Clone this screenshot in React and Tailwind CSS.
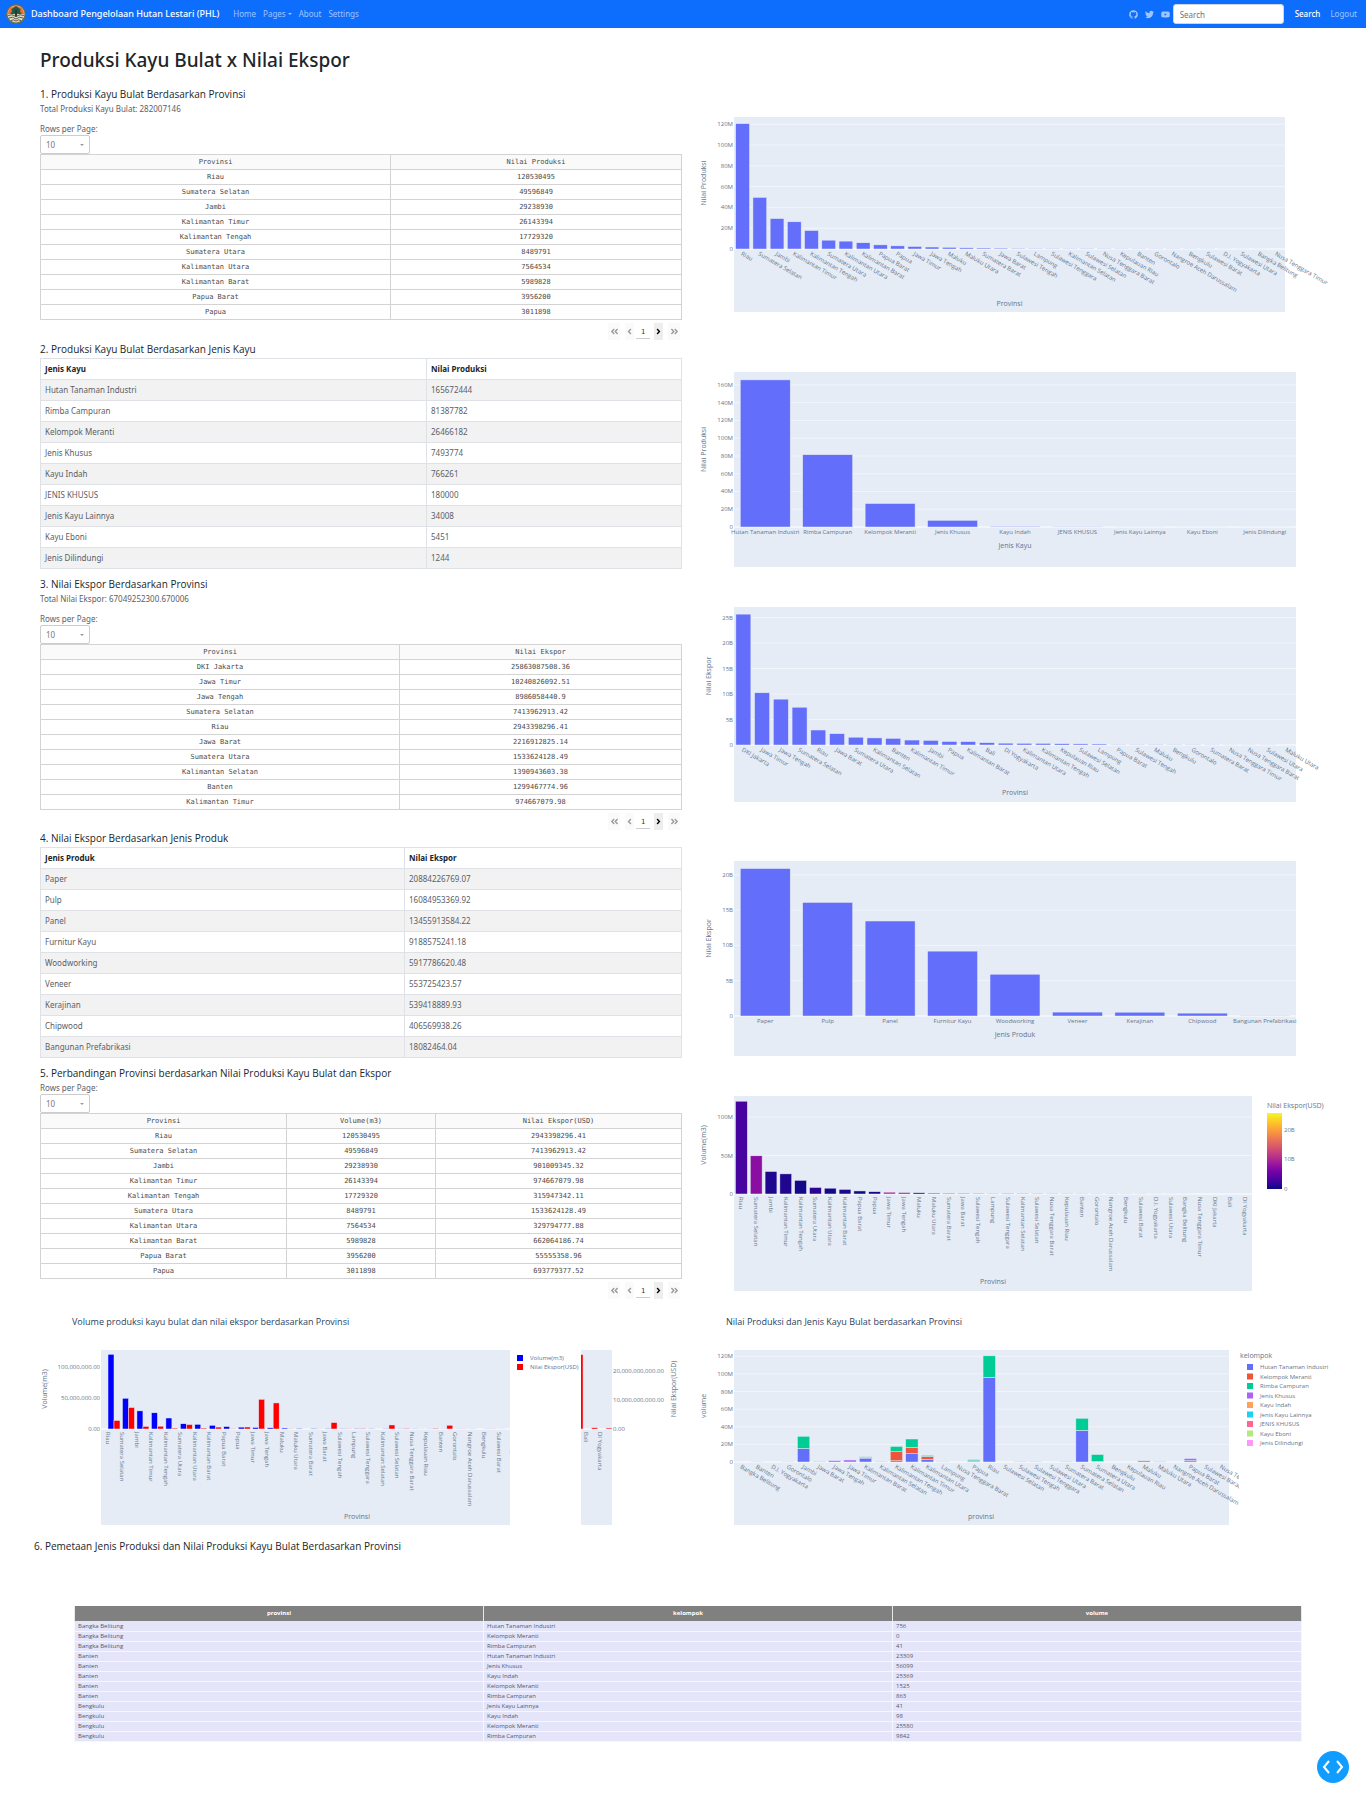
import React from "react";
import {
  FaAngleDoubleLeft,
  FaAngleDoubleRight,
  FaAngleLeft,
  FaAngleRight,
  FaGithub,
  FaTwitter,
  FaYoutube,
} from "react-icons/fa";

/* ---------- data ---------- */

const productionByProvince = [
  ["Riau", 120.53], ["Sumatera Selatan", 49.6], ["Jambi", 29.24], ["Kalimantan Timur", 26.14],
  ["Kalimantan Tengah", 17.73], ["Sumatera Utara", 8.49], ["Kalimantan Utara", 7.56],
  ["Kalimantan Barat", 5.99], ["Papua Barat", 3.96], ["Papua", 3.01], ["Jawa Timur", 2.4],
  ["Jawa Tengah", 1.9], ["Maluku", 1.6], ["Maluku Utara", 1.1], ["Sumatera Barat", 0.95],
  ["Jawa Barat", 0.85], ["Sulawesi Tengah", 0.6], ["Lampung", 0.4], ["Sulawesi Tenggara", 0.3],
  ["Kalimantan Selatan", 0.25], ["Sulawesi Selatan", 0.2], ["Nusa Tenggara Barat", 0.15],
  ["Kepulauan Riau", 0.12], ["Banten", 0.11], ["Gorontalo", 0.1], ["Nangroe Aceh Darussalam", 0.1],
  ["Bengkulu", 0.08], ["Sulawesi Barat", 0.06], ["D.I. Yogyakarta", 0.04], ["Sulawesi Utara", 0.02],
  ["Bangka Belitung", 0.01], ["Nusa Tenggara Timur", 0],
];

const exportByProvince = [
  ["DKI Jakarta", 25.66], ["Jawa Timur", 10.24], ["Jawa Tengah", 8.99], ["Sumatera Selatan", 7.41],
  ["Riau", 2.94], ["Jawa Barat", 2.22], ["Sumatera Utara", 1.53], ["Kalimantan Selatan", 1.39],
  ["Banten", 1.3], ["Kalimantan Timur", 0.97], ["Jambi", 0.9], ["Papua", 0.69],
  ["Kalimantan Barat", 0.66], ["Bali", 0.45], ["DI Yogyakarta", 0.36], ["Kalimantan Utara", 0.33],
  ["Kalimantan Tengah", 0.32], ["Kepulauan Riau", 0.25], ["Sulawesi Selatan", 0.22], ["Lampung", 0.2],
  ["Papua Barat", 0.06], ["Sulawesi Tengah", 0.05], ["Maluku", 0.04], ["Bengkulu", 0.03],
  ["Gorontalo", 0.03], ["Sumatera Barat", 0.02], ["Nusa Tenggara Timur", 0.01],
  ["Nusa Tenggara Barat", 0.01], ["Sulawesi Utara", 0.01], ["Maluku Utara", 0],
];

const exportLookup = Object.fromEntries(exportByProvince);

const comparison = [
  ...productionByProvince,
  ["DKI Jakarta", 0],
  ["Bali", 0],
  ["DI Yogyakarta", 0],
].map(([name, volume]) => ({ name, volume, value: exportLookup[name] || 0 }));

const woodRows = [
  ["Hutan Tanaman Industri", "165672444"], ["Rimba Campuran", "81387782"],
  ["Kelompok Meranti", "26466182"], ["Jenis Khusus", "7493774"], ["Kayu Indah", "766261"],
  ["JENIS KHUSUS", "180000"], ["Jenis Kayu Lainnya", "34008"], ["Kayu Eboni", "5451"],
  ["Jenis Dilindungi", "1244"],
];

const productRows = [
  ["Paper", "20884226769.07"], ["Pulp", "16084953369.92"], ["Panel", "13455913584.22"],
  ["Furnitur Kayu", "9188575241.18"], ["Woodworking", "5917786620.48"], ["Veneer", "553725423.57"],
  ["Kerajinan", "539418889.93"], ["Chipwood", "406569938.26"], ["Bangunan Prefabrikasi", "18082464.04"],
];

const productionRows = [
  ["Riau", "120530495"], ["Sumatera Selatan", "49596849"], ["Jambi", "29238930"],
  ["Kalimantan Timur", "26143394"], ["Kalimantan Tengah", "17729320"], ["Sumatera Utara", "8489791"],
  ["Kalimantan Utara", "7564534"], ["Kalimantan Barat", "5989828"], ["Papua Barat", "3956200"],
  ["Papua", "3011898"],
];

const exportRows = [
  ["DKI Jakarta", "25863087508.36"], ["Jawa Timur", "10240826092.51"], ["Jawa Tengah", "8986058440.9"],
  ["Sumatera Selatan", "7413962913.42"], ["Riau", "2943398296.41"], ["Jawa Barat", "2216912825.14"],
  ["Sumatera Utara", "1533624128.49"], ["Kalimantan Selatan", "1390943603.38"],
  ["Banten", "1299467774.96"], ["Kalimantan Timur", "974667079.98"],
];

const comparisonRows = [
  ["Riau", "120530495", "2943398296.41"], ["Sumatera Selatan", "49596849", "7413962913.42"],
  ["Jambi", "29238930", "901009345.32"], ["Kalimantan Timur", "26143394", "974667079.98"],
  ["Kalimantan Tengah", "17729320", "315947342.11"], ["Sumatera Utara", "8489791", "1533624128.49"],
  ["Kalimantan Utara", "7564534", "329794777.88"], ["Kalimantan Barat", "5989828", "662064186.74"],
  ["Papua Barat", "3956200", "55555358.96"], ["Papua", "3011898", "693779377.52"],
];

const groups = [
  ["Hutan Tanaman Industri", "#636efa"], ["Kelompok Meranti", "#EF553B"], ["Rimba Campuran", "#00cc96"],
  ["Jenis Khusus", "#ab63fa"], ["Kayu Indah", "#FFA15A"], ["Jenis Kayu Lainnya", "#19d3f3"],
  ["JENIS KHUSUS", "#FF6692"], ["Kayu Eboni", "#B6E880"], ["Jenis Dilindungi", "#FF97FF"],
];

// Stacked volumes per province, in the order of `groups`.
const stacks = [
  ["Bangka Belitung", []], ["Banten", [0, 0, 0, 0.1]], ["D.I. Yogyakarta", []], ["Gorontalo", [0.1]],
  ["Jambi", [15.3, 0, 13.9]], ["Jawa Barat", [0, 0, 0, 0.5]], ["Jawa Tengah", [0, 0, 0, 1.6]],
  ["Jawa Timur", [0, 0, 0, 2.3]], ["Kalimantan Barat", [4.4, 0.9, 0.6]], ["Kalimantan Selatan", [0.2]],
  ["Kalimantan Tengah", [1.4, 10.3, 6]], ["Kalimantan Timur", [9.4, 7, 9.7]],
  ["Kalimantan Utara", [2.8, 3.6, 1.1]], ["Lampung", [0, 0, 0, 0.2]], ["Nusa Tenggara Barat", []],
  ["Papua", [0, 0.3, 1.9, 0.8]], ["Riau", [96, 0, 24.5]], ["Sulawesi Selatan", []],
  ["Sulawesi Tengah", [0, 0.2]], ["Sulawesi Tenggara", [0, 0.2]], ["Sulawesi Utara", []],
  ["Sumatera Barat", [0, 0.4]], ["Sumatera Selatan", [36, 0, 13.6]], ["Sumatera Utara", [0.8, 0, 7.7]],
  ["Bengkulu", []], ["Kepulauan Riau", []], ["Maluku", [0, 1.3]], ["Maluku Utara", [0, 0.1, 0.6]],
  ["Nangroe Aceh Darussalam", []], ["Papua Barat", [0, 0, 1.7, 2.2]], ["Sulawesi Barat", []],
  ["Nusa Tenggara Timur", []],
];

const mappingRows = [
  ["Bangka Belitung", "Hutan Tanaman Industri", "756"], ["Bangka Belitung", "Kelompok Meranti", "0"],
  ["Bangka Belitung", "Rimba Campuran", "41"], ["Banten", "Hutan Tanaman Industri", "23309"],
  ["Banten", "Jenis Khusus", "56099"], ["Banten", "Kayu Indah", "25369"],
  ["Banten", "Kelompok Meranti", "1525"], ["Banten", "Rimba Campuran", "863"],
  ["Bengkulu", "Jenis Kayu Lainnya", "41"], ["Bengkulu", "Kayu Indah", "98"],
  ["Bengkulu", "Kelompok Meranti", "25580"], ["Bengkulu", "Rimba Campuran", "9842"],
];

/* ---------- charts ---------- */

const PLASMA = [
  [13, 8, 135], [70, 3, 159], [114, 1, 168], [156, 23, 158], [189, 55, 134],
  [216, 87, 107], [237, 121, 83], [251, 159, 58], [253, 202, 38], [240, 249, 33],
];

function plasma(t) {
  const p = Math.min(Math.max(t, 0), 1) * 9;
  const i = Math.min(Math.floor(p), 8);
  const mix = PLASMA[i].map((c, k) => Math.round(c + (PLASMA[i + 1][k] - c) * (p - i)));
  return `rgb(${mix.join(",")})`;
}

const PAPER = "#E5ECF6";

function ChartSvg({ label, children }) {
  return (
    <svg
      viewBox="0 0 642 225"
      role="img"
      aria-label={label}
      className="block h-auto w-full overflow-visible fill-[#66758c] font-['Open_Sans',sans-serif] text-[6px]"
    >
      {children}
    </svg>
  );
}

function Bar({ x, y, w, h, fill }) {
  return <rect x={x} y={y} width={w} height={h} fill={fill} stroke={PAPER} strokeWidth="0.5" />;
}

function Grid({ left, right, zero, step, unit, ticks }) {
  return ticks.map((t, i) => (
    <g key={t}>
      <line
        x1={left}
        x2={right}
        y1={zero - i * step * unit}
        y2={zero - i * step * unit}
        stroke="#fff"
        strokeWidth={i === 0 ? 1 : 0.5}
      />
      <text x={left - 1} y={zero - i * step * unit + 2} textAnchor="end">{t}</text>
    </g>
  ));
}

function YTitle({ x, y, children }) {
  return (
    <text transform={`translate(${x} ${y}) rotate(-90)`} textAnchor="middle" className="text-[7px]">
      {children}
    </text>
  );
}

function BarChart({ label, data, right, zero, unit, step, ticks, xTitle, xTitleY, yTitle, yTitleX, angle = 0, colors }) {
  const left = 40;
  const slot = (right - left) / data.length;
  return (
    <ChartSvg label={label}>
      <rect x={left} y="30" width={right - left} height="195" fill={PAPER} />
      <Grid left={left} right={right} zero={zero} step={step} unit={unit} ticks={ticks} />
      {data.map(([name, value], i) => {
        const cx = left + slot * (i + 0.5);
        return (
          <g key={name}>
            {value > 0 && (
              <Bar x={cx - slot * 0.4} y={zero - value * unit} w={slot * 0.8} h={value * unit} fill={colors ? colors[i] : "#636efa"} />
            )}
            {angle === 0 && <text x={cx} y={zero + 7} textAnchor="middle">{name}</text>}
            {angle === 30 && <text transform={`translate(${cx - 2} ${zero + 6}) rotate(30)`}>{name}</text>}
            {angle === 90 && <text transform={`translate(${cx - 2} ${zero + 3}) rotate(90)`}>{name}</text>}
          </g>
        );
      })}
      <text x={(left + right) / 2} y={xTitleY} textAnchor="middle" className="text-[7px]">{xTitle}</text>
      <YTitle x={yTitleX} y={(30 + zero) / 2}>{yTitle}</YTitle>
      {colors && (
        <>
          <defs>
            <linearGradient id="plasma" x1="0" y1="1" x2="0" y2="0">
              {PLASMA.map((c, i) => (
                <stop key={i} offset={i / 9} stopColor={`rgb(${c.join(",")})`} />
              ))}
            </linearGradient>
          </defs>
          <rect x="573" y="47" width="15" height="76" fill="url(#plasma)" />
          <text x="573" y="42" className="text-[7px]">Nilai Ekspor(USD)</text>
          <text x="590" y="66">20B</text>
          <text x="590" y="95">10B</text>
          <text x="590" y="125">0</text>
        </>
      )}
    </ChartSvg>
  );
}

function DualAxisChart() {
  const zero = 129;
  const at = (i) => 68 + i * 14.47;
  return (
    <ChartSvg label="Volume produksi kayu bulat dan nilai ekspor berdasarkan Provinsi">
      <text x="32" y="25" className="fill-[#2a3f5f] text-[9px]">
        Volume produksi kayu bulat dan nilai ekspor berdasarkan Provinsi
      </text>
      <rect x="61" y="50" width="511" height="175" fill={PAPER} />
      <line x1="61" x2="572" y1={zero} y2={zero} stroke="#fff" />
      {comparison.map(({ name, volume, value }, i) => {
        const w = Math.min(6, 572 - at(i) - 6);
        return (
          <g key={name}>
            {volume > 0 && <Bar x={at(i)} y={zero - volume * 0.62} w={6} h={volume * 0.62} fill="#00f" />}
            {value > 0 && w > 0 && <Bar x={at(i) + 6} y={zero - value * 2.9} w={w} h={value * 2.9} fill="#f00" />}
            <text transform={`translate(${at(i) - 2} ${zero + 3}) rotate(90)`}>{name}</text>
          </g>
        );
      })}
      <rect x="470" y="50" width="71" height="175" fill="#fff" />
      <rect x="477" y="55" width="6" height="6" fill="#00f" />
      <text x="490" y="60">Volume(m3)</text>
      <rect x="477" y="64" width="6" height="6" fill="#f00" />
      <text x="490" y="69">Nilai Ekspor(USD)</text>
      <text x="60" y="69" textAnchor="end">100,000,000.00</text>
      <text x="60" y="100" textAnchor="end">50,000,000.00</text>
      <text x="60" y="131" textAnchor="end">0.00</text>
      <text x="573" y="73">20,000,000,000.00</text>
      <text x="573" y="102">10,000,000,000.00</text>
      <text x="573" y="131">0.00</text>
      <text x="317" y="219" textAnchor="middle" className="text-[7px]">Provinsi</text>
      <YTitle x={7} y={89}>Volume(m3)</YTitle>
      <YTitle x={636} y={89}>Nilai Ekspor(USD)</YTitle>
    </ChartSvg>
  );
}

function StackedChart() {
  const zero = 162;
  const unit = 0.881;
  const slot = 495 / stacks.length;
  return (
    <ChartSvg label="Nilai Produksi dan Jenis Kayu Bulat berdasarkan Provinsi">
      <defs>
        <clipPath id="stack-labels">
          <rect x="0" y="50" width="545" height="175" />
        </clipPath>
      </defs>
      <text x="32" y="25" className="fill-[#2a3f5f] text-[9px]">
        Nilai Produksi dan Jenis Kayu Bulat berdasarkan Provinsi
      </text>
      <rect x="40" y="50" width="495" height="175" fill={PAPER} />
      <Grid left={40} right={535} zero={zero} step={20} unit={unit} ticks={["0", "20M", "40M", "60M", "80M", "100M", "120M"]} />
      <g clipPath="url(#stack-labels)">
        {stacks.map(([name, parts], i) => {
          const cx = 40 + slot * (i + 0.5);
          return (
            <g key={name}>
              {parts.map((v, k) => {
                const base = parts.slice(0, k).reduce((a, b) => a + b, 0);
                return v > 0 ? (
                  <Bar key={k} x={cx - slot * 0.4} y={zero - (base + v) * unit} w={slot * 0.8} h={v * unit} fill={groups[k][1]} />
                ) : null;
              })}
              <text transform={`translate(${cx - 2} ${zero + 6}) rotate(30)`}>{name}</text>
            </g>
          );
        })}
      </g>
      <text x="287" y="219" textAnchor="middle" className="text-[7px]">provinsi</text>
      <YTitle x={12} y={106}>volume</YTitle>
      <text x="546" y="58" className="text-[7px]">kelompok</text>
      {groups.map(([name, color], i) => (
        <g key={name}>
          <rect x="553" y={64 + i * 9.5} width="6" height="6" fill={color} />
          <text x="566" y={69 + i * 9.5}>{name}</text>
        </g>
      ))}
    </ChartSvg>
  );
}

/* ---------- tables ---------- */

function DataTable({ columns, widths, rows }) {
  return (
    <table className="w-full table-fixed border-collapse text-center font-['DejaVu_Sans_Mono',monospace] text-[7px] leading-[14px] text-[#4a4a4a]">
      <colgroup>
        {widths.map((w, i) => (
          <col key={i} className={w} />
        ))}
      </colgroup>
      <thead>
        <tr className="bg-[#fafafa]">
          {columns.map((c) => (
            <th key={c} className="border border-[#d3d3d3] p-0 font-normal">{c}</th>
          ))}
        </tr>
      </thead>
      <tbody>
        {rows.map((r) => (
          <tr key={r[0]}>
            {r.map((v, i) => (
              <td key={i} className="border border-[#d3d3d3] p-0">{v}</td>
            ))}
          </tr>
        ))}
      </tbody>
    </table>
  );
}

function StripedTable({ columns, widths, rows }) {
  return (
    <table className="w-full table-fixed border-collapse text-left text-[8px] leading-3 text-[#5c6066]">
      <colgroup>
        {widths.map((w, i) => (
          <col key={i} className={w} />
        ))}
      </colgroup>
      <thead>
        <tr>
          {columns.map((c) => (
            <th key={c} className="border border-[#dee2e6] px-1 py-1 font-bold text-[#212529]">{c}</th>
          ))}
        </tr>
      </thead>
      <tbody>
        {rows.map((r) => (
          <tr key={r[0]} className="odd:bg-[#f2f2f2]">
            {r.map((v, i) => (
              <td key={i} className="border border-[#dee2e6] px-1 py-1">{v}</td>
            ))}
          </tr>
        ))}
      </tbody>
    </table>
  );
}

function RowsPerPage({ id }) {
  return (
    <div className="flex flex-col items-start">
      <label htmlFor={id} className="text-[8px] leading-3 text-[#5c6066]">Rows per Page:</label>
      <div className="relative">
        <select
          id={id}
          defaultValue="10"
          className="block h-[19px] w-[50px] appearance-none rounded-[2px] border border-[#ccc] bg-white pl-[5px] text-[8px] text-[#777]"
        >
          <option>10</option>
          <option>25</option>
          <option>50</option>
        </select>
        <span className="pointer-events-none absolute right-[6px] top-[9px] border-x-2 border-t-2 border-x-transparent border-t-[#999]" />
      </div>
    </div>
  );
}

function Pager({ id }) {
  return (
    <nav aria-label="Pagination" className="mt-[3px] flex h-[17px] items-stretch justify-end pr-[2px] text-[9px] text-[#999]">
      <button type="button" aria-label="First page" disabled className="flex w-3 items-center justify-center bg-[#fafafa]"><FaAngleDoubleLeft /></button>
      <button type="button" aria-label="Previous page" disabled className="ml-[5px] flex w-[9px] items-center justify-center bg-[#fafafa]"><FaAngleLeft /></button>
      <input
        id={id}
        aria-label="Current page"
        defaultValue="1"
        className="ml-[2px] mb-px w-[14px] border-b border-[#ccc] pt-[3px] text-center font-['DejaVu_Sans_Mono',monospace] text-[7px] text-[#333]"
      />
      <button type="button" aria-label="Next page" className="ml-1 flex w-[9px] items-center justify-center bg-[#eee] text-black"><FaAngleRight /></button>
      <button type="button" aria-label="Last page" className="ml-[5px] flex w-3 items-center justify-center bg-[#fafafa]"><FaAngleDoubleRight /></button>
    </nav>
  );
}

function Section({ title, total, children, chart, className = "" }) {
  return (
    <section className={`grid grid-cols-2 items-start gap-x-3 px-[6px] ${className}`}>
      <div>
        <h2 className="mb-[2px] font-['Open_Sans',sans-serif] text-[10px] font-medium leading-[14px] text-[#212529]">{title}</h2>
        {total && <p className="mb-2 text-[8px] leading-3 text-[#5c6066]">{total}</p>}
        {children}
      </div>
      {chart}
    </section>
  );
}

/* ---------- header ---------- */

function Logo() {
  return (
    <svg viewBox="0 0 40 40" className="size-5" role="img" aria-label="Logo">
      <circle cx="20" cy="20" r="20" fill="#6d6a4e" />
      <circle cx="20" cy="20" r="17" fill="#dcdccb" />
      <path d="M4 20a16 16 0 0 1 32 0Z" fill="#ee6a2b" />
      <path d="M20 4 25 8 29 10 28 15 31 20H23L20 17 17 20H9L12 15 11 10 15 8Z" fill="#1d5c48" />
      <path d="M18 11h4v15h-4z" fill="#2f3a2c" />
      <path d="M4 23q8-4 16 2 8-6 16-2M6 28q7-4 14 2 7-6 14-2M10 33q5-3 10 1 5-4 10-1" fill="none" stroke="#5d5c45" strokeWidth="2" />
    </svg>
  );
}

function Navbar() {
  return (
    <header className="flex h-7 items-center bg-[#0d6efd] pl-[6px] pr-[9px] text-[8px] text-white/60">
      <Logo />
      <a href="#" className="ml-[5px] text-[9px] font-medium leading-7 text-white">Dashboard Pengelolaan Hutan Lestari (PHL)</a>
      <nav className="ml-[14px] flex items-center gap-[7px]">
        <a href="#">Home</a>
        <a href="#" className="flex items-center gap-[2px]">
          Pages
          <span className="border-x-2 border-t-2 border-x-transparent border-t-current" />
        </a>
        <a href="#">About</a>
        <a href="#">Settings</a>
      </nav>
      <div className="ml-auto flex items-center">
        <a href="#" aria-label="GitHub" className="mr-[7px] text-[9px]"><FaGithub /></a>
        <a href="#" aria-label="Twitter" className="mr-[7px] text-[9px]"><FaTwitter /></a>
        <a href="#" aria-label="YouTube" className="mr-[3px] text-[9px]"><FaYoutube /></a>
        <input
          type="search"
          aria-label="Search"
          placeholder="Search"
          className="h-5 w-[111px] rounded-[3px] border border-[#ced4da] bg-white px-[6px] text-[8px] text-[#212529] placeholder:text-[#6c757d]"
        />
        <button type="button" className="ml-[11px] font-medium text-white">Search</button>
        <a href="#" className="ml-[10px]">Logout</a>
      </div>
    </header>
  );
}

/* ---------- page ---------- */

export default function App() {
  const short = (rows, scale) => rows.map(([n, v]) => [n, Number(v) / scale]);
  return (
    <div className="min-h-screen bg-white font-['Noto_Sans',sans-serif] text-[#212529]">
      <Navbar />
      <main className="pb-14 pl-[34px] pr-6">
        <h1 className="px-[6px] pb-[14px] pt-5 text-[19px] font-medium leading-[25px]">Produksi Kayu Bulat x Nilai Ekspor</h1>

        <Section
          title="1. Produksi Kayu Bulat Berdasarkan Provinsi"
          total="Total Produksi Kayu Bulat: 282007146"
          className="pb-[2px]"
          chart={
            <BarChart label="Nilai produksi per provinsi" data={productionByProvince} right={591} zero={162} unit={1.04} step={20}
              ticks={["0", "20M", "40M", "60M", "80M", "100M", "120M"]} xTitle="Provinsi" xTitleY={219} yTitle="Nilai Produksi" yTitleX={12} angle={30} />
          }
        >
          <RowsPerPage id="rows-production" />
          <DataTable columns={["Provinsi", "Nilai Produksi"]} widths={["w-[350px]", ""]} rows={productionRows} />
          <Pager id="page-production" />
        </Section>

        <Section
          title="2. Produksi Kayu Bulat Berdasarkan Jenis Kayu"
          className="pb-2"
          chart={
            <BarChart label="Nilai produksi per jenis kayu" data={short(woodRows, 1e6)} right={602} zero={185} unit={0.888} step={20}
              ticks={["0", "20M", "40M", "60M", "80M", "100M", "120M", "140M", "160M"]} xTitle="Jenis Kayu" xTitleY={206} yTitle="Nilai Produksi" yTitleX={12} />
          }
        >
          <StripedTable columns={["Jenis Kayu", "Nilai Produksi"]} widths={["w-[386px]", ""]} rows={woodRows} />
        </Section>

        <Section
          title="3. Nilai Ekspor Berdasarkan Provinsi"
          total="Total Nilai Ekspor: 67049252300.670006"
          className="pb-px"
          chart={
            <BarChart label="Nilai ekspor per provinsi" data={exportByProvince} right={602} zero={168} unit={5.1} step={5}
              ticks={["0", "5B", "10B", "15B", "20B", "25B"]} xTitle="Provinsi" xTitleY={218} yTitle="Nilai Ekspor" yTitleX={17} angle={30} />
          }
        >
          <RowsPerPage id="rows-export" />
          <DataTable columns={["Provinsi", "Nilai Ekspor"]} widths={["w-[359px]", ""]} rows={exportRows} />
          <Pager id="page-export" />
        </Section>

        <Section
          title="4. Nilai Ekspor Berdasarkan Jenis Produk"
          className="pb-2"
          chart={
            <BarChart label="Nilai ekspor per jenis produk" data={short(productRows, 1e9)} right={602} zero={185} unit={7.06} step={5}
              ticks={["0", "5B", "10B", "15B", "20B"]} xTitle="Jenis Produk" xTitleY={206} yTitle="Nilai Ekspor" yTitleX={17} />
          }
        >
          <StripedTable columns={["Jenis Produk", "Nilai Ekspor"]} widths={["w-[364px]", ""]} rows={productRows} />
        </Section>

        <Section
          title="5. Perbandingan Provinsi berdasarkan Nilai Produksi Kayu Bulat dan Ekspor"
          className="pb-px"
          chart={
            <BarChart label="Volume dan nilai ekspor per provinsi" data={comparison.map((d) => [d.name, d.volume])}
              colors={comparison.map((d) => plasma(d.value / 25.86))} right={558} zero={128} unit={0.77} step={50}
              ticks={["0", "50M", "100M"]} xTitle="Provinsi" xTitleY={218} yTitle="Volume(m3)" yTitleX={12} angle={90} />
          }
        >
          <RowsPerPage id="rows-comparison" />
          <DataTable columns={["Provinsi", "Volume(m3)", "Nilai Ekspor(USD)"]} widths={["w-[246px]", "w-[149px]", ""]} rows={comparisonRows} />
          <Pager id="page-comparison" />
        </Section>

        <section className="grid grid-cols-2 gap-x-3 px-[6px]">
          <DualAxisChart />
          <StackedChart />
        </section>

        <section className="pt-[14px]">
          <h2 className="font-['Open_Sans',sans-serif] text-[10px] font-medium leading-[14px] text-[#212529]">
            6. Pemetaan Jenis Produksi dan Nilai Produksi Kayu Bulat Berdasarkan Provinsi
          </h2>
          <div className="mx-10 mt-[53px]">
            <table className="w-full table-fixed border-collapse text-left font-['Open_Sans',sans-serif] text-[6px] leading-[9px] text-[#50586c]">
              <thead>
                <tr>
                  {["provinsi", "kelompok", "volume"].map((c) => (
                    <th key={c} className="border border-t-0 border-[#e8e8e8] bg-[#808080] px-1 py-[3px] text-center font-bold text-white">{c}</th>
                  ))}
                </tr>
              </thead>
              <tbody>
                {mappingRows.map((r) => (
                  <tr key={r.join()}>
                    {r.map((v, i) => (
                      <td key={i} className="border border-[#f6f6fe] bg-[#e5e5fa] px-[3px] py-0">{v}</td>
                    ))}
                  </tr>
                ))}
              </tbody>
            </table>
          </div>
        </section>
      </main>
      <button
        type="button"
        aria-label="Toggle developer tools"
        className="fixed bottom-5 right-[17px] flex size-8 items-center justify-center rounded-full bg-[#119dff]"
      >
        <svg viewBox="0 0 24 14" className="h-[14px] w-6" fill="none" stroke="#fff" strokeWidth="2">
          <path d="M8 1 3 7 8 13M16 1 21 7 16 13" />
        </svg>
      </button>
    </div>
  );
}
